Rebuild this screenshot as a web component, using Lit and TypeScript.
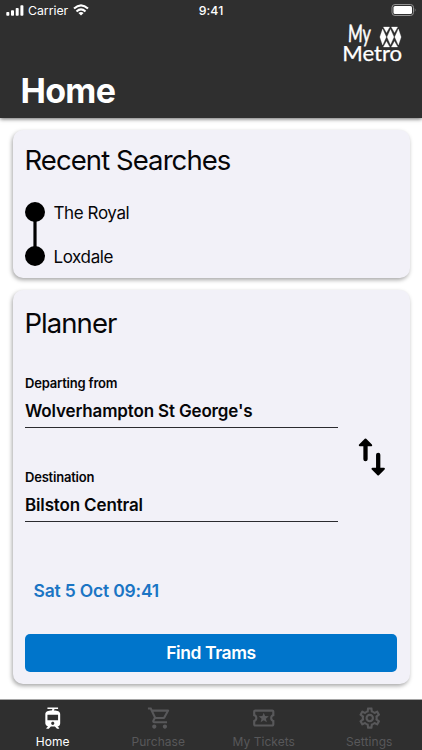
import { LitElement, html, css, svg } from "lit";
import { customElement, property } from "lit/decorators.js";

const icons: Record<string, unknown> = {
  home: svg`<path fill-rule="evenodd" d="M19 16.940V8.500c0-2.790-2.610-3.400-6.010-3.490l.76-1.510H17V2H7v1.500h4.750l-.76 1.520C7.860 5.110 5 5.730 5 8.500v8.440c0 1.450 1.190 2.660 2.590 2.970L6 21.500V22h2.230l2-2H14l2 2h2v-.5L16.500 20h-.08c1.690 0 2.580-1.370 2.580-3.060zm-7 1.560c-.83 0-1.500-.67-1.500-1.500s.67-1.500 1.500-1.500 1.500.67 1.500 1.500-.67 1.500-1.500 1.500zm5-4.500H7V9h10v5z"/>`,
  purchase: svg`<path transform="translate(.8 0)" d="M15.550 13c.75 0 1.410-.41 1.750-1.030l3.580-6.490A.996.996 0 0 0 20.010 4H5.210l-.94-2H1v2h2l3.600 7.590-1.350 2.440C4.520 15.370 5.480 17 7 17h12v-2H7l1.100-2h7.450zM6.160 6h12.150l-2.760 5H8.530L6.160 6zM7 18c-1.100 0-1.990.9-1.990 2S5.900 22 7 22s2-.9 2-2-.9-2-2-2zm10 0c-1.100 0-1.990.9-1.990 2s.89 2 1.990 2 2-.9 2-2-.9-2-2-2z"/>`,
  tickets: svg`<path d="M20 12c0-1.100.9-2 2-2V6c0-1.100-.9-2-2-2H4c-1.100 0-1.990.9-1.990 2v4c1.100 0 1.990.9 1.990 2s-.89 2-2 2v4c0 1.100.9 2 2 2h16c1.100 0 2-.9 2-2v-4c-1.100 0-2-.9-2-2zm0-3.460c-1.190.69-2 1.990-2 3.460s.81 2.770 2 3.460V18H4v-2.540c1.190-.69 2-1.990 2-3.460 0-1.480-.8-2.770-1.990-3.460L4 6h16v2.540zM9.070 16L12 14.120 14.930 16l-.89-3.360 2.690-2.200-3.470-.21L12 7l-1.270 3.220-3.470.21 2.690 2.200z"/>`,
  settings: svg`<path d="M19.430 12.980c.04-.32.070-.64.070-.98s-.03-.66-.07-.98l2.110-1.650c.19-.15.240-.42.120-.64l-2-3.460a.5.5 0 0 0-.61-.22l-2.490 1c-.52-.4-1.080-.73-1.690-.98l-.38-2.650A.488.488 0 0 0 14 2h-4c-.25 0-.46.180-.49.420l-.38 2.650c-.61.250-1.170.590-1.690.980l-2.490-1a.5.5 0 0 0-.61.220l-2 3.460c-.13.220-.07.490.12.640l2.110 1.650c-.04.320-.07.650-.07.980s.03.660.070.980l-2.110 1.650c-.19.150-.24.420-.12.640l2 3.460c.12.220.39.290.61.220l2.490-1c.52.400 1.080.730 1.690.980l.38 2.650c.03.240.24.420.49.420h4c.25 0 .46-.18.490-.42l.38-2.650c.61-.25 1.170-.59 1.690-.98l2.490 1c.23.080.49 0 .61-.22l2-3.460a.5.5 0 0 0-.12-.64l-2.110-1.650zm-1.980-1.710c.04.310.050.520.050.730s-.02.430-.05.730l-.14 1.130.89.700 1.080.840-.7 1.210-1.270-.51-1.040-.42-.9.680c-.43.320-.84.560-1.250.730l-1.060.430-.16 1.130-.2 1.350h-1.400l-.19-1.350-.16-1.130-1.060-.43c-.43-.18-.83-.41-1.230-.71l-.91-.7-1.060.430-1.270.510-.7-1.210 1.080-.84.890-.7-.14-1.130c-.03-.31-.05-.54-.05-.74s.02-.43.050-.73l.14-1.130-.89-.7-1.080-.84.700-1.210 1.270.510 1.040.420.900-.68c.43-.32.840-.56 1.250-.73l1.060-.43.160-1.130.2-1.350h1.390l.19 1.350.16 1.130 1.060.430c.43.180.83.410 1.230.710l.91.700 1.060-.43 1.270-.51.700 1.210-1.070.850-.89.700.14 1.130zM12 8a4 4 0 1 0 0 8 4 4 0 0 0 0-8zm0 6a2 2 0 1 1 0-4 2 2 0 0 1 0 4z"/>`,
};

@customElement("app-header")
class AppHeader extends LitElement {
  static styles = css`
    :host { display: block; flex: none; height: 118px; background: #2f2f2f; color: #fff; box-shadow: 0 1px 4px rgba(0,0,0,.6); z-index: 1; }
    .status { display: grid; grid-template-columns: 1fr auto 1fr; align-items: center; height: 20px; padding: 0 6px; font-size: 12.300px; }
    .left { display: flex; align-items: center; }
    .bars { width: 18px; height: 11px; margin-right: 4px; }
    .carrier { letter-spacing: -.02px; }
    .wifi { width: 16px; height: 12px; margin-left: 5px; }
    .time { font-weight: 500; letter-spacing: .1px; }
    .battery { width: 26px; height: 12px; justify-self: end; margin-right: -1px; }
    .brand { display: flex; justify-content: flex-end; padding-right: 18px; height: 45px; }
    .logo { width: 64px; height: 50px; margin-top: -5px; }
    .my { font: 400 24px "Lato", sans-serif; }
    .metro { font: 400 21px "Lato", sans-serif; }
    .title { margin: 5px 0 0 20.500px; font-size: 34px; line-height: 42px; font-weight: 700; letter-spacing: -.7px; }
  `;
  render() {
    return html`
      <div class="status">
        <div class="left">
          <svg class="bars" viewBox="0 0 18 11" fill="#fff"><rect x=".3" y="7" width="3" height="3.800" rx=".8"/><rect x="5" y="5.200" width="3" height="5.600" rx=".8"/><rect x="9.700" y="3" width="3" height="7.800" rx=".8"/><rect x="14.400" y=".3" width="3" height="10.500" rx=".8"/></svg>
          <span class="carrier">Carrier</span>
          <svg class="wifi" viewBox="0 0 16 12" fill="none" stroke="#fff" stroke-width="2.100"><path d="M1 4.600Q8-1.800 15 4.600M3.500 7.400Q8 3.200 12.500 7.400"/><path d="M8 11.600L5.400 8.900Q8 7 10.600 8.900Z" fill="#fff" stroke="none"/></svg>
        </div>
        <span class="time">9:41</span>
        <svg class="battery" viewBox="0 0 26 12"><rect x="1" y=".5" width="21.500" height="11" rx="3" fill="none" stroke="#929292"/><rect x="2.500" y="2" width="18.500" height="8" rx="1.600" fill="#fff"/><path d="M23.800 4q1.500 2 0 4z" fill="#929292"/></svg>
      </div>
      <div class="brand">
        <svg class="logo" viewBox="340 15 64 50" fill="#fff">
          <text class="my" transform="translate(347.800 42) skewX(-2) scale(.66 1)" stroke="#fff" stroke-width=".6">My</text>
          <text class="metro" x="342.200" y="61" textLength="60" lengthAdjust="spacingAndGlyphs" stroke="#fff" stroke-width=".25">Metro</text>
          <path d="M383.400 27H389.600L386.500 32.600ZM391.400 27H397.600L394.500 32.600ZM383.400 47H389.600L386.500 41.400ZM391.400 47H397.600L394.500 41.400ZM390.500 29.400L393.900 37 390.500 44.600 387.100 37ZM382.600 29L386.200 37 382.600 45 379.900 37ZM398.400 29L401.100 37 398.400 45 394.800 37Z" stroke="#fff" stroke-width=".3"/>
        </svg>
      </div>
      <div class="title">Home</div>`;
  }
}

@customElement("recent-card")
class RecentCard extends LitElement {
  static styles = css`
    :host { display: block; box-sizing: border-box; height: 148px; padding: 13px 12.500px; border-radius: 10px; background: #f2f1f8; box-shadow: -1px 2px 4px rgba(0,0,0,.35); }
    .title { font-size: 27.500px; line-height: 34px; letter-spacing: -.93px; margin-left: -.5px; }
    .stops { display: grid; grid-template-columns: 20px 1fr; column-gap: 8.500px; margin-top: 25px; }
    .route { width: 20px; height: 64px; }
    .names { display: flex; flex-direction: column; gap: 23px; font-size: 17px; line-height: 21px; letter-spacing: -.4px; padding-top: .5px; }
  `;
  render() {
    return html`
      <div class="title">Recent Searches</div>
      <div class="stops">
        <svg class="route" viewBox="0 0 20 64"><path d="M10 10V54" stroke="#000" stroke-width="3.200"/><circle cx="10" cy="10" r="10"/><circle cx="10" cy="54" r="10"/></svg>
        <div class="names"><span>The Royal</span><span>Loxdale</span></div>
      </div>`;
  }
}

@customElement("planner-card")
class PlannerCard extends LitElement {
  static styles = css`
    :host { display: flex; flex-direction: column; box-sizing: border-box; height: 394px; padding: 16px 12.500px 12.500px; border-radius: 10px; background: #f2f1f8; box-shadow: -1px 2px 4px rgba(0,0,0,.35); }
    .title { font-size: 27.500px; line-height: 34px; letter-spacing: -.95px; margin-left: -.5px; }
    .form { display: grid; grid-template-columns: 313px 1fr; margin-top: 34px; align-items: center; }
    .field { border-bottom: 1px solid #2b2b2f; height: 53px; }
    .field + .field { margin-top: 40px; }
    .label { font-size: 13px; line-height: 18px; font-weight: 600; letter-spacing: -.2px; }
    .value { margin-top: 8px; font-size: 17px; line-height: 22px; font-weight: 600; letter-spacing: -.15px; }
    .swap { width: 28px; height: 38px; justify-self: end; margin: 17px 11px 0 0; }
    .date { margin: 58px 0 0 8.500px; font-size: 17.500px; line-height: 22px; font-weight: 600; letter-spacing: -.2px; color: #1b75c4; }
    .find { margin-top: auto; padding: 0; flex: none; height: 38px; border: 0; border-radius: 5px; background: #0075cb; color: #fff; font: 600 17.500px "Inter", sans-serif; letter-spacing: -.4px; }
  `;
  render() {
    return html`
      <div class="title">Planner</div>
      <div class="form">
        <div>
          <div class="field"><div class="label">Departing from</div><div class="value">Wolverhampton St George's</div></div>
          <div class="field"><div class="label">Destination</div><div class="value">Bilston Central</div></div>
        </div>
        <svg class="swap" viewBox="0 0 28 38" fill="#000" stroke="#000" stroke-linecap="round" stroke-linejoin="round"><path d="M7.500 6V21.200M20.200 16.800V32" stroke-width="4.300"/><path d="M7.500 1.500L13.200 7.200H1.800ZM20.200 36.500L25.900 30.800H14.500Z" stroke-width="2"/></svg>
      </div>
      <div class="date">Sat 5 Oct 09:41</div>
      <button class="find">Find Trams</button>`;
  }
}

@customElement("tab-item")
class TabItem extends LitElement {
  @property() icon = "home";
  @property() label = "";
  @property({ type: Boolean, reflect: true }) active = false;
  static styles = css`
    :host { display: flex; flex-direction: column; align-items: center; color: #58585a; }
    :host([active]) { color: #fff; }
    .icon { width: 25.500px; height: 26px; margin-top: 5px; fill: currentColor; }
    .label { margin-top: 2px; font-size: 12px; line-height: 17px; letter-spacing: .05px; }
  `;
  render() {
    return html`<svg class="icon" viewBox="0 0 24 24">${icons[this.icon]}</svg><span class="label">${this.label}</span>`;
  }
}

@customElement("app-root")
class AppRoot extends LitElement {
  static styles = css`
    :host { display: flex; flex-direction: column; width: 422px; height: 750px; overflow: hidden; background: #fff; color: #060608; font-family: "Inter", sans-serif; }
    .content { flex: 1; display: flex; flex-direction: column; gap: 12px; padding: 12px 12.500px 0; }
    .tabs { flex: none; display: grid; grid-template-columns: repeat(4, 1fr); height: 50px; background: #2f2f2f; border-top: 1px solid #a5a5a5; }
  `;
  render() {
    return html`
      <app-header></app-header>
      <main class="content"><recent-card></recent-card><planner-card></planner-card></main>
      <nav class="tabs">
        <tab-item icon="home" label="Home" active></tab-item>
        <tab-item icon="purchase" label="Purchase"></tab-item>
        <tab-item icon="tickets" label="My Tickets"></tab-item>
        <tab-item icon="settings" label="Settings"></tab-item>
      </nav>`;
  }
}
